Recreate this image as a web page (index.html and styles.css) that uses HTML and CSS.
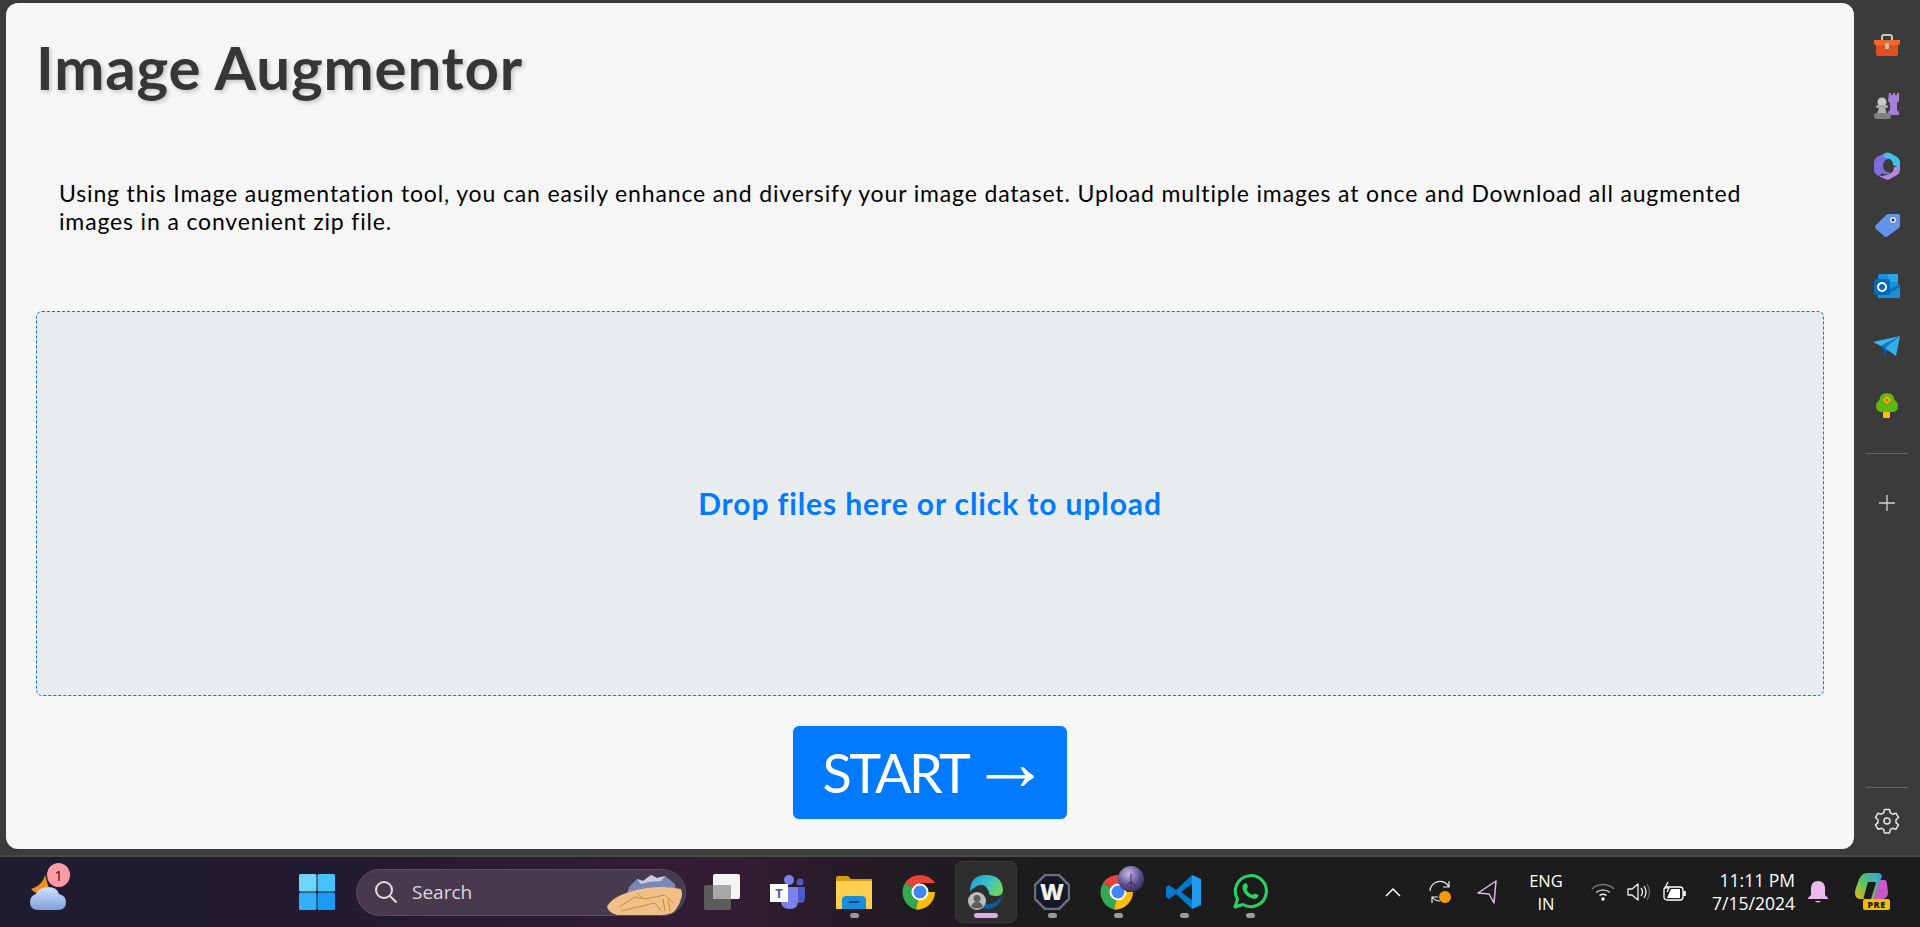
FILE: index.html
```html
<!DOCTYPE html>
<html lang="en">
<head>
<meta charset="utf-8">
<title>Image Augmentor</title>
<link rel="stylesheet" href="styles.css">
</head>
<body>
<div class="window">
  <main class="card">
    <h1 class="title">Image Augmentor</h1>
    <p class="intro">Using this Image augmentation tool, you can easily enhance and diversify your image dataset. Upload multiple images at once and Download all augmented images in a convenient zip file.</p>
    <div class="dropzone">Drop files here or click to upload</div>
    <div class="actions"><button class="start">START <span class="arrow">→</span></button></div>
  </main>
  <aside class="sidebar">
    <div class="side-top">
      <div class="side-icon"><svg width="28" height="24" viewBox="0 0 28 24"><path d="M9 6V3q0-2 2-2h6q2 0 2 2v3" fill="none" stroke="#c9c5c2" stroke-width="2"/><path d="M3 8h22v12q0 2-2 2H5q-2 0-2-2z" fill="#e0501f"/><path d="M1 6h26v3q0 2-2 2H3q-2 0-2-2z" fill="#f0682c"/><rect x="12" y="9" width="4" height="6" rx="1" fill="#c4c0bc"/></svg></div>
      <div class="side-icon"><svg width="28" height="28" viewBox="0 0 28 28"><path d="M17 2h2v2h2V2h2v2h2V2h2v8l-2 2v7l2 2v3H16v-3l2-2v-7l-2-2z" fill="#a680d8" transform="translate(-1 -1)"/><circle cx="9" cy="10" r="4.5" fill="#c8c8c8"/><rect x="3" y="13" width="12" height="3" rx="1.500" fill="#a8a8a8"/><path d="M6 16h6l2 6H4z" fill="#b0b0b0"/><rect x="1" y="21" width="17" height="6" rx="3" fill="#808080"/></svg></div>
      <div class="side-icon"><svg width="26" height="28" viewBox="0 0 26 28"><path d="M11 1 3 5q-3 2-3 5v8q0 3 3 5l2 1q2-1 3-3 3 2 7 1l2-1-4-1q-4-2-4-6 0-4 3-6l5-3z" fill="#7a6fd8"/><path d="M11 1q3-1 5 0l7 4q3 2 3 5v6l-7-3q0-4-3-6l-7-2z" fill="#3fc0e8"/><path d="M26 15v3q0 3-3 5l-7 4q-3 1-5 0l-6-3q8 0 12-3 3-2 3-6z" fill="#b48ae0"/></svg></div>
      <div class="side-icon"><svg width="26" height="26" viewBox="0 0 26 26"><path d="M15 1h9q2 0 2 2v9q0 2-1 3L14 23q-2 2-4 0l-8-7q-2-2 0-4L12 2q1-1 3-1z" fill="#6494e8"/><circle cx="19" cy="7" r="3" fill="#e8e8f0"/><circle cx="19" cy="7" r="1.500" fill="#33384a"/></svg></div>
      <div class="side-icon"><svg width="26" height="26" viewBox="0 0 26 26"><rect x="4" y="1" width="20" height="23" rx="2" fill="#1490df"/><rect x="14" y="1" width="10" height="8" fill="#28a8ea"/><path d="M3 12h23v12q0 1-1 1H4z" fill="#1b8fd8"/><path d="M14 18l12-7v3l-12 7z" fill="#0a6cb8"/><rect y="6" width="16" height="16" rx="2" fill="#0369b9"/><circle cx="8" cy="14" r="4" fill="none" stroke="#fff" stroke-width="2"/></svg></div>
      <div class="side-icon"><svg width="28" height="22" viewBox="0 0 28 22"><path d="M0 7 27 1 8 11z" fill="#3db4f0"/><path d="M27 1 8 11l4 7z" fill="#1679c8"/><path d="M27 1 12 13l11 8z" fill="#35aef0"/><path d="M8 11l3 6v4l3-5-2-3z" fill="#0e5aa8"/></svg></div>
      <div class="side-icon"><svg width="24" height="26" viewBox="0 0 24 26"><rect x="8" y="18" width="7" height="7" rx="1" fill="#f2c200"/><path d="M12 0q7 0 7.500 7 3.500 2 3.500 6 0 6-6 6H7q-6 0-6-6 0-4 3.500-6Q5 0 12 0z" fill="#5fb60e"/><path d="M12 3l4.500 4L12 11 7.500 7z" fill="#f7b800"/><circle cx="12" cy="7" r="1.500" fill="#e8502a"/></svg></div>
      <div class="side-divider"></div>
      <div class="side-plus"><svg width="18" height="18" viewBox="0 0 18 18"><path d="M9 1v16M1 9h16" stroke="#d4d4d4" stroke-width="1.300"/></svg></div>
    </div>
    <div class="side-bottom">
      <div class="side-divider"></div>
      <div class="side-gear"><svg width="26" height="26" viewBox="0 0 26 26" fill="none" stroke="#e6e6e6" stroke-width="1.500"><path d="M10.500 1.500h5l.8 3.300 2.400 1.400 3.300-1 2.500 4.300-2.500 2.300v2.800l2.500 2.300-2.500 4.300-3.300-1-2.400 1.400-.8 3.300h-5l-.8-3.300-2.400-1.400-3.300 1-2.500-4.300 2.500-2.300v-2.800L1.500 9.500 4 5.200l3.300 1 2.400-1.400z" stroke-linejoin="round"/><circle cx="13" cy="13" r="3"/></svg></div>
    </div>
  </aside>
</div>
<footer class="taskbar">
  <div class="weather">
    <svg width="36" height="36" viewBox="0 0 36 36"><defs><linearGradient id="cloudG" x1="0" y1="0" x2="0" y2="1"><stop offset="0" stop-color="#cfe2fa"/><stop offset="1" stop-color="#7f9fdc"/></linearGradient></defs><path d="M15 1q-2 10-14 14 7 8 19 3z" fill="#f0901e"/><path d="M8 36q-8 0-8-8 0-6 6-8 2-6 12-7 9 0 11 7 7 2 7 8 0 8-8 8z" fill="url(#cloudG)"/></svg>
    <span class="badge">1</span>
  </div>
  <div class="start-btn"><svg width="36" height="36" viewBox="0 0 36 36"><rect width="17.500" height="17.500" x="0" y="0" rx="1.500" fill="#6fd5fb"/><rect width="17.500" height="17.500" x="18.500" y="0" rx="1.500" fill="#45c1fc"/><rect width="17.500" height="17.500" x="0" y="18.500" rx="1.500" fill="#32aefa"/><rect width="17.500" height="17.500" x="18.500" y="18.500" rx="1.500" fill="#1a9bf8"/></svg></div>
  <div class="search">
    <svg class="search-glass" width="24" height="24" viewBox="0 0 24 24" fill="none" stroke="#e4e0e8" stroke-width="2"><circle cx="10" cy="10" r="8"/><path d="M16 16l6 6" stroke-linecap="round"/></svg>
    <span class="search-label">Search</span>
    <svg class="search-art" width="76" height="46" viewBox="0 0 76 46"><path d="M22 18l8-8 6 2 8-6 6 3 8-2 10 8 2 10H20z" fill="#7a86b4"/><path d="M30 10l6 2 8-6 6 3 8-2-4 5-12 1-8 2z" fill="#c8cce0"/><path d="M0 38Q4 28 26 22 50 15 74 20q2 6 0 10-2 8-10 16H10Q2 44 0 38z" fill="#f0c088"/><path d="M12 38 28 28l10 2 20-4 8 8M30 24l6 6M14 42l34-8 6 8M56 30l2 12M61 30l2 12" fill="none" stroke="#c98a3e" stroke-width="1"/></svg>
  </div>
  <div class="tasks">
    <div class="task"><svg width="36" height="36" viewBox="0 0 36 36"><rect x="0" y="11" width="27" height="25" rx="2" fill="#5c5c5c"/><rect x="9" y="0" width="27" height="25" rx="2" fill="#f4f4f4"/><rect x="9" y="11" width="18" height="14" fill="#a8a8a8"/></svg></div>
    <div class="task"><svg width="36" height="36" viewBox="0 0 36 36"><circle cx="19" cy="6" r="5" fill="#7b83eb"/><circle cx="30" cy="8" r="3.500" fill="#5059c9"/><path d="M24 13h11v11q0 5-5 5t-6-4z" fill="#5059c9"/><path d="M11 13h17v14q0 8-8 8-9 0-9-8z" fill="#7b83eb"/><rect x="0" y="10" width="18" height="18" fill="#fff"/><text x="9" y="24" class="teams-t">T</text></svg></div>
    <div class="task"><svg width="36" height="36" viewBox="0 0 36 36"><path d="M0 4q0-2 2-2h10l3 3h21v10H0z" fill="#d59a10"/><path d="M0 7h36v28H0z" fill="#ffd04f"/><path d="M6 35V26q0-4 4-4h16q4 0 4 4v9z" fill="#1b8cd8"/><rect x="13" y="27" width="10" height="2" fill="#0a4f8c"/></svg><span class="dot"></span></div>
    <div class="task"><svg width="36" height="36" viewBox="0 0 36 36"><path d="M18 18 3 9a18 18 0 0 1 30 0H18z" fill="#ea4335"/><path d="M18 18 3 9a18 18 0 0 0 11 26.600z" fill="#34a853"/><path d="M18 18h15a18 18 0 0 1-19 17.600z" fill="#fbbc04"/><circle cx="18" cy="18" r="8.500" fill="#fff"/><circle cx="18" cy="18" r="6.500" fill="#4285f4"/></svg></div>
    <div class="task task-active"><svg width="36" height="36" viewBox="0 0 36 36"><path d="M2 18Q2 1 18 1q16 0 17 15 0 6-7 6-7 0-7-3 0-2-1-3-4-8-11-4-7 4-7 6z" fill="url(#edgeGrad)"/><path d="M35 20q-3 14-15 15-9 0-10-8 3 4 10 3 10 0 15-10z" fill="#0c59a4"/><defs><linearGradient id="edgeGrad" x1="0" y1="0" x2="1" y2=".4"><stop offset="0" stop-color="#1a9ee0"/><stop offset=".6" stop-color="#36c1c8"/><stop offset="1" stop-color="#6cd663"/></linearGradient></defs><circle cx="9" cy="27" r="9" fill="#bdbdbd"/><circle cx="9" cy="24.500" r="3.500" fill="#5d5d5d"/><path d="M3 33q1-5 6-5t6 5q-6 3-12 0z" fill="#5d5d5d"/></svg><span class="dot dot-active"></span></div>
    <div class="task"><svg width="36" height="36" viewBox="0 0 36 36"><path d="M11 1h14l10 10v14L25 35H11L1 25V11z" fill="#141826" stroke="#6a6e7c" stroke-width="2.500"/><text x="18" y="26" class="wave-w">W</text></svg><span class="dot"></span></div>
    <div class="task"><svg width="36" height="36" viewBox="0 0 36 36"><path d="M18 18 3 9a18 18 0 0 1 30 0H18z" fill="#ea4335"/><path d="M18 18 3 9a18 18 0 0 0 11 26.600z" fill="#34a853"/><path d="M18 18h15a18 18 0 0 1-19 17.600z" fill="#fbbc04"/><circle cx="18" cy="18" r="8.500" fill="#fff"/><circle cx="18" cy="18" r="6.500" fill="#4285f4"/></svg><svg class="profile" width="26" height="26" viewBox="0 0 26 26"><defs><radialGradient id="profG" cx=".4" cy=".3" r=".8"><stop offset="0" stop-color="#c8b8e8"/><stop offset=".6" stop-color="#5a4a88"/><stop offset="1" stop-color="#2e2448"/></radialGradient></defs><circle cx="13" cy="13" r="13" fill="url(#profG)"/><path d="M13 8v14M9 20q4-8 8 0" stroke="#3a2e58" fill="none"/></svg><span class="dot"></span></div>
    <div class="task"><svg width="36" height="36" viewBox="0 0 36 36"><path d="M26 1 10 16 3 11 0 13v10l3 2 7-5 16 15V26L15 18 26 10z" fill="#007acc"/><path d="M26 1 35 5v26l-9 4z" fill="#1f9cf0"/></svg><span class="dot"></span></div>
    <div class="task"><svg width="36" height="36" viewBox="0 0 36 36" fill="none"><path d="M3 33l2.500-8A15.500 15.500 0 1 1 11 30.500z" stroke="#25d366" stroke-width="3" stroke-linejoin="round"/><path d="M12 10q2-2 3 0l1 3-1.500 2q1 4 6 6l2-1.500 3 1q2 1 0 3-2 2-5 1-8-2-10-10-.5-3 1.500-5z" fill="#25d366"/></svg><span class="dot"></span></div>
  </div>
  <div class="tray">
    <div class="tray-item w46"><svg width="16" height="10" viewBox="0 0 16 10" fill="none" stroke="#fff" stroke-width="1.500"><path d="M1 9l7-7 7 7"/></svg></div>
    <div class="tray-item w48"><svg width="24" height="26" viewBox="0 0 24 26" fill="none" stroke="#eee" stroke-width="1.200"><path d="M2 12A10 10 0 0 1 21 8M21 2v6h-6M4 24v-6h6M4 18q3 4 8 4"/><circle cx="17" cy="18" r="6" fill="#f59a0c" stroke="none"/></svg></div>
    <div class="tray-item w46"><svg width="22" height="26" viewBox="0 0 22 26" fill="none" stroke="#e4b4ec" stroke-width="1.500"><path d="M20 2 2 14l11 1 5 9z" stroke-linejoin="round"/></svg></div>
    <div class="tray-item lang"><span>ENG</span><span>IN</span></div>
    <div class="tray-item w42"><svg width="24" height="18" viewBox="0 0 24 18" fill="none" stroke-width="1.500"><path d="M1 6a16 16 0 0 1 22 0" stroke="#777"/><path d="M5 9.500a11 11 0 0 1 14 0" stroke="#bbb"/><path d="M8.500 12.500a6 6 0 0 1 7 0" stroke="#eee"/><circle cx="12" cy="16" r="1.700" fill="#fff"/></svg></div>
    <div class="tray-item w30"><svg width="24" height="20" viewBox="0 0 24 20" fill="none" stroke="#eee" stroke-width="1.300"><path d="M1 7v6h4l6 5V2L5 7z" stroke-linejoin="round"/><path d="M14 6q3 4 0 8M17 4q4 6 0 12"/><path d="M20 2q5 8 0 16" stroke="#666"/></svg></div>
    <div class="tray-item w42"><svg width="24" height="20" viewBox="0 0 24 20" fill="none" stroke="#fff" stroke-width="1.300"><rect x="1" y="5" width="19" height="13" rx="3"/><path d="M4 16l4-9h9v9z" fill="#fff" stroke="none"/><path d="M21.500 9v5" stroke-width="2.500"/><path d="M5 0 2 6h4l-2 4" stroke-width="1.200"/></svg></div>
    <div class="clock"><span>11:11 PM</span><span>7/15/2024</span></div>
    <div class="tray-item w46"><svg width="20" height="24" viewBox="0 0 20 24"><path d="M10 1q7 0 7 8v6l3 3v1H0v-1l3-3V9q0-8 7-8z" fill="#ecb8ee"/><path d="M7 21h6q-3 3-6 0z" fill="#ecb8ee"/></svg></div>
    <div class="tray-item copilot"><svg class="copilot-mark" width="34" height="28" viewBox="0 0 34 28"><defs><linearGradient id="coA" x1="0" y1="1" x2="1" y2="0"><stop offset="0" stop-color="#f2b417"/><stop offset=".45" stop-color="#5cc65a"/><stop offset="1" stop-color="#2c9cf0"/></linearGradient></defs><path d="M13 0h11q3 0 4 3l-8 23H7q-6 0-6-6 0-4 2-8 3-12 10-12z" fill="url(#coA)"/><path d="M26 7h4q3 0 3 4l1 8q0 7-6 7h-9z" fill="#c85ac8"/><path d="M14 9h6q2 0 2 1l-5 16h-6q-2 0-1-3z" fill="#1c1c1c"/></svg><span class="pre">PRE</span></div>
  </div>
</footer>
</body>
</html>
```
FILE: styles.css
```css
* { box-sizing: border-box; }
html, body { margin: 0; height: 927px; overflow: hidden; }
body { background: #3b3b3b; font-family: "Open Sans", sans-serif; display: flex; flex-direction: column; }

.window { display: flex; height: 855px; padding-top: 3px; }
.card {
  width: 1848px; height: 846px; margin-left: 6px;
  background: #f6f6f6; border-radius: 12px;
  padding: 0 30px; display: flex; flex-direction: column;
  font-family: Lato, "Liberation Sans", sans-serif;
}
.title {
  margin: 28px 0 0 0; font-size: 60px; line-height: 72px; font-weight: 700; color: #363636;
  letter-spacing: .8px;
  text-shadow: 2px 2px 4px rgba(0,0,0,.2);
}
.intro {
  margin: 76px 0 0 23px; width: 1720px; font-size: 23px; line-height: 28px; color: #000;
  letter-spacing: .85px;
}
.dropzone {
  margin-top: 76px; height: 385px; width: 1788px; padding-bottom: 2px;
  border: 1px dashed #007bff; border-radius: 6px; background: #e9ecef;
  display: flex; align-items: center; justify-content: center;
  color: #007bff; font-size: 30px; font-weight: 700; letter-spacing: .9px;
}
.actions { display: flex; justify-content: center; margin-top: 30px; width: 1788px; }
.start {
  width: 274px; height: 93px; border: 0; border-radius: 6px; background: #007bff; color: #fff;
  font-family: inherit; font-size: 54px; letter-spacing: -2.500px; padding: 0 0 0 13px;
  display: flex; align-items: center; justify-content: center; gap: 2px;
}
.arrow { font-family: "Liberation Sans", sans-serif; font-size: 80px; font-weight: 400; letter-spacing: 0; line-height: 60px; margin-top: -19px; }

.sidebar { flex: 1; display: flex; flex-direction: column; justify-content: space-between; align-items: center; }
.side-top { display: flex; flex-direction: column; align-items: center; padding-top: 13px; }
.side-icon { width: 66px; height: 60px; display: flex; align-items: center; justify-content: center; }
.side-divider { width: 42px; height: 1px; background: #636363; }
.side-top .side-divider { margin-top: 17px; }
.side-plus { height: 98px; display: flex; align-items: center; justify-content: center; }
.side-bottom { display: flex; flex-direction: column; align-items: center; padding-bottom: 11px; }
.side-gear { height: 56px; padding-top: 20px; }

.taskbar {
  height: 72px; border-top: 2px solid #4a4a4a; display: flex; align-items: center; position: relative;
  background: linear-gradient(90deg, #201c30 0%, #231b31 18%, #2e1c35 30%, #351c33 38%, #221b23 46%, #1c1c1c 56%, #1c1c1c 100%);
}
.weather { width: 36px; height: 36px; margin-left: 30px; position: relative; }
.badge {
  position: absolute; left: 17px; top: -11px; width: 23px; height: 24px; border-radius: 50%;
  background: #ff9aa6; color: #222; font-size: 15px; line-height: 24px; text-align: center;
}
.start-btn { margin-left: 233px; width: 36px; height: 36px; }
.search {
  margin-left: 21px; width: 330px; height: 47px; border-radius: 24px;
  background: #49394f; border: 1.500px solid #5b4d63;
  display: flex; align-items: center; overflow: hidden;
}
.search-glass { margin-left: 17px; }
.search-label { margin-left: 14px; color: #dcd8de; font-size: 19px; }
.search-art { margin-left: auto; margin-right: 2px; }
.tasks { display: flex; margin-left: 3px; }
.task { width: 66px; height: 70px; display: flex; align-items: center; justify-content: center; position: relative; }
.task-active::before {
  content: ""; position: absolute; left: 2px; top: 4px; width: 60px; height: 60px; border-radius: 7px;
  background: #2e2e2e; border: 1px solid #383838;
}
.task svg { position: relative; }
.task .profile { position: absolute; left: 33px; top: 9px; }
.dot { position: absolute; bottom: 9px; left: 29px; width: 9px; height: 5px; border-radius: 3px; background: #9a9a9a; }
.dot-active { left: 21px; width: 24px; background: #e3a8e8; }
.teams-t { font: 700 13px "Open Sans", sans-serif; fill: #4b53bc; text-anchor: middle; }
.wave-w { font: 800 23px "Open Sans", sans-serif; fill: #f0f0f0; text-anchor: middle; }

.tray { margin-left: auto; display: flex; align-items: center; padding-right: 17px; color: #fff; }
.tray-item { display: flex; align-items: center; justify-content: center; height: 70px; }
.w46 { width: 46px; } .w48 { width: 48px; } .w42 { width: 42px; } .w30 { width: 30px; }
.lang { width: 72px; flex-direction: column; font-size: 16.500px; line-height: 23px; }
.lang span, .clock span { display: block; }
.clock { width: 99px; text-align: right; font-size: 17.500px; line-height: 23px; white-space: nowrap; }
.copilot { width: 62px; position: relative; }
.copilot-mark { margin-bottom: 10px; margin-left: -2px; }
.pre {
  position: absolute; left: 22px; top: 42px; width: 27px; height: 11px; background: #f6bc00; border-radius: 2px;
  color: #1c1c1c; font: 800 9px/11px "Open Sans", sans-serif; text-align: center; letter-spacing: .5px;
}
```
